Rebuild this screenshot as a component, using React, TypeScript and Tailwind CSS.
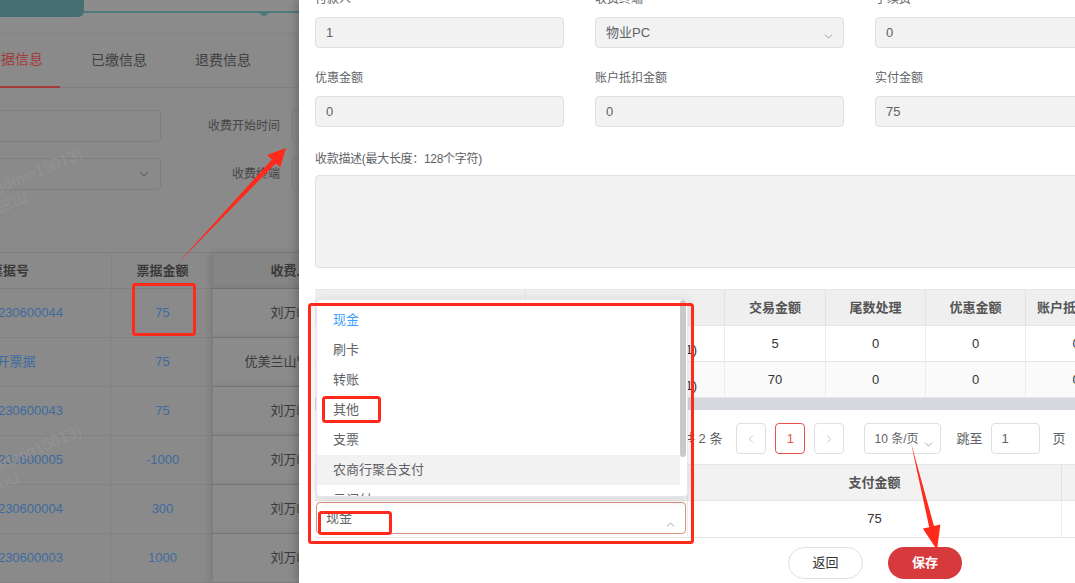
import { ChevronDown, ChevronLeft, ChevronRight, ChevronUp } from "lucide-react";

const leftRows = [
  ["HNS20230600044", "75", "刘万峰"],
  ["未开票据", "75", "优美兰山管理处"],
  ["HNS20230600043", "75", "刘万峰"],
  ["HNS20230600005", "-1000", "刘万峰"],
  ["HNS20230600004", "300", "刘万峰"],
  ["HNS20230600003", "1000", "刘万峰"],
];

const payTypes = ["现金", "刷卡", "转账", "其他", "支票", "农商行聚合支付", "云闪付"];

const LeftPage = () => {
  return (
    <div className="relative h-full w-[299px] shrink-0 overflow-hidden bg-[#8a8a8a]">
      {/* top bar */}
      <div className="flex h-[33px] items-start border-b border-[#868686] bg-[#8c8c8c]">
        <div className="h-[17px] w-[84px] shrink-0 rounded-br-[6px] bg-[#456f70]" />
        <div className="relative mt-[11px] h-[2px] flex-1 bg-[#4d7a7a]">
          <div className="absolute left-[174px] top-[1px] h-0 w-0 border-x-[6px] border-t-[5px] border-x-transparent border-t-[#4d7a7a]" />
        </div>
      </div>

      {/* tabs */}
      <div className="-ml-[30px] flex h-[55px] border-b border-[#7f7f7f]">
        <div className="-mb-px mr-[14px] flex w-[90px] shrink-0 items-center justify-center border-b-2 border-[#a33b3b] text-[14px] text-[#a33b3b]">
          票据信息
        </div>
        <div className="mr-[14px] flex w-[90px] shrink-0 items-center justify-center text-[14px] text-[#3f3f3f]">
          已缴信息
        </div>
        <div className="flex w-[90px] shrink-0 items-center justify-center text-[14px] text-[#3f3f3f]">
          退费信息
        </div>
      </div>

      {/* filter form */}
      <div className="-ml-[30px] flex flex-col gap-[16px] pt-[22px]">
        <div className="flex items-center">
          <div className="h-[32px] w-[191px] shrink-0 rounded-[4px] border border-[#7e7e7e]" />
          <div className="w-[119px] shrink-0 text-right text-[12px] text-[#454545]">收费开始时间</div>
          <div className="ml-[12px] h-[32px] w-[200px] shrink-0 rounded-[4px] border border-[#7e7e7e]" />
        </div>
        <div className="flex items-center">
          <div className="flex h-[32px] w-[191px] shrink-0 items-center justify-end rounded-[4px] border border-[#7e7e7e] pr-[9px] text-[#454545]">
            <ChevronDown size={14} strokeWidth={1.5} />
          </div>
          <div className="w-[119px] shrink-0 text-right text-[12px] text-[#454545]">收费终端</div>
          <div className="ml-[12px] h-[32px] w-[200px] shrink-0 rounded-[4px] border border-[#7e7e7e]" />
        </div>
      </div>

      {/* table */}
      <div className="-ml-[92px] mt-[62px] w-[470px] text-[13px]">
        <div className="flex h-[37px] border-y border-[#7f7f7f] font-bold text-[#3a3a3a]">
          <div className="flex w-[204px] shrink-0 items-center justify-center border-r border-[#828282]">票据号</div>
          <div className="flex w-[101px] shrink-0 items-center justify-center">票据金额</div>
          <div className="flex w-[154px] shrink-0 items-center justify-center bg-[#858585] shadow-[-3px_0_6px_rgba(0,0,0,0.12)]">
            收费人
          </div>
        </div>
        {leftRows.map((r, i) => (
          <div key={i} className="flex h-[49px] border-b border-[#828282]">
            <div className="flex w-[204px] shrink-0 items-center justify-center border-r border-[#858585] text-[#3d6aa0]">
              {r[0]}
            </div>
            <div className="flex w-[101px] shrink-0 items-center justify-center text-[#3d6aa0]">{r[1]}</div>
            <div className="flex w-[154px] shrink-0 items-center justify-center whitespace-nowrap bg-[#8b8b8b] text-[#3a3a3a] shadow-[-3px_0_6px_rgba(0,0,0,0.12)]">
              {r[2]}
            </div>
          </div>
        ))}
      </div>

      {/* watermark */}
      <div className="pointer-events-none absolute left-[-6px] top-[182px] origin-left -rotate-[23deg] whitespace-nowrap text-[16px] leading-[18px] text-[#929292]">
        <div>(admin15013)</div>
        <div>兰山</div>
      </div>
      <div className="pointer-events-none absolute left-[-6px] top-[460px] origin-left -rotate-[24deg] whitespace-nowrap text-[16px] leading-[18px] text-[#929292]">
        <div>(admin15013)</div>
        <div>xiU</div>
      </div>
    </div>
  );
};

const Field = ({ label, value, select }: { label: string; value: string; select?: boolean }) => (
  <div>
    <div className="mb-[8px] h-[20px] text-[12px] leading-[20px] text-[#606266]">{label}</div>
    <div className="relative flex h-[31px] items-center rounded-[4px] border border-[#dcdfe6] bg-[#f2f2f2] px-[10px] text-[13px] text-[#606266]">
      {value}
      {select && (
        <ChevronDown size={13} strokeWidth={1.5} className="absolute bottom-[4px] right-[8px] text-[#909399]" />
      )}
    </div>
  </div>
);

const Modal = () => {
  return (
    <div className="relative h-full flex-1 overflow-hidden bg-white shadow-[-3px_0_8px_rgba(0,0,0,0.2)]">
      <div className="-mt-[11px] w-[900px] pl-[16px]">
        <div className="grid grid-cols-[249px_249px_249px] gap-x-[31px] gap-y-[20px]">
          <Field label="付款人" value="1" />
          <Field label="收费终端" value="物业PC" select />
          <Field label="手续费" value="0" />
          <Field label="优惠金额" value="0" />
          <Field label="账户抵扣金额" value="0" />
          <Field label="实付金额" value="75" />
        </div>

        <div className="mt-[22px] h-[20px] text-[12px] leading-[20px] tracking-[-0.3px] text-[#606266]">
          收款描述(最大长度：128个字符)
        </div>
        <div className="mt-[6px] h-[93px] w-[809px] rounded-[4px] border border-[#dcdfe6] bg-[#f2f2f2]" />

        {/* detail table */}
        <div className="mt-[21px] w-[811px] text-[13px]">
          <div className="grid h-[37px] grid-cols-[211px_199px_101px_100px_100px_100px] border-y border-[#e6e6e6] bg-[#efefef] font-bold text-[#555]">
            <div className="border-r border-[#e2e2e2]" />
            <div className="border-r border-[#e2e2e2]" />
            <div className="flex items-center justify-center border-r border-[#e2e2e2]">交易金额</div>
            <div className="flex items-center justify-center border-r border-[#e2e2e2]">尾数处理</div>
            <div className="flex items-center justify-center border-r border-[#e2e2e2]">优惠金额</div>
            <div className="flex items-center justify-center whitespace-nowrap">账户抵扣金额</div>
          </div>
          {[
            ["5", "bg-white"],
            ["70", "bg-[#fafafa]"],
          ].map(([v, bg], i) => (
            <div
              key={i}
              className={`grid h-[36px] grid-cols-[211px_199px_101px_100px_100px_100px] border-b border-[#e6e6e6] text-[#333] ${bg}`}
            >
              <div className="border-r border-[#ececec]" />
              <div className="flex items-end justify-end whitespace-nowrap border-r border-[#ececec] pb-[2px] pr-[27px]">
                物业服务费(2023-06-01)
              </div>
              <div className="flex items-center justify-center border-r border-[#ececec]">{v}</div>
              <div className="flex items-center justify-center border-r border-[#ececec]">0</div>
              <div className="flex items-center justify-center border-r border-[#ececec]">0</div>
              <div className="flex items-center justify-center">0</div>
            </div>
          ))}
          <div className="h-[12px] bg-[#d7d7df]" />
        </div>

        {/* pagination */}
        <div className="mt-[13px] flex h-[31px] items-center pl-[367px] text-[13px] text-[#606266]">
          <span className="mr-[14px] whitespace-nowrap">共 2 条</span>
          <div className="flex h-[31px] w-[30px] items-center justify-center rounded-[4px] border border-[#dcdfe6] text-[#c0c4cc]">
            <ChevronLeft size={14} strokeWidth={1.5} />
          </div>
          <div className="ml-[9px] flex h-[31px] w-[30px] items-center justify-center rounded-[4px] border border-[#e5534b] text-[#e5534b]">
            1
          </div>
          <div className="ml-[9px] flex h-[31px] w-[30px] items-center justify-center rounded-[4px] border border-[#dcdfe6] text-[#c0c4cc]">
            <ChevronRight size={14} strokeWidth={1.5} />
          </div>
          <div className="relative ml-[20px] flex h-[31px] w-[77px] items-center whitespace-nowrap rounded-[4px] border border-[#dcdfe6] pl-[9px] text-[12px]">
            10 条/页
            <ChevronDown size={13} strokeWidth={1.5} className="absolute bottom-[2px] right-[5px] text-[#909399]" />
          </div>
          <span className="ml-[15px]">跳至</span>
          <div className="ml-[9px] flex h-[31px] w-[49px] items-center rounded-[4px] border border-[#dcdfe6] pl-[9px]">1</div>
          <span className="ml-[12px]">页</span>
        </div>

        {/* payment table */}
        <div className="mt-[10px] w-[850px] text-[13px]">
          <div className="grid h-[37px] grid-cols-[373px_374px_100px] border-y border-[#e6e6e6] bg-[#f2f2f2] font-bold text-[#555]">
            <div className="flex items-center justify-center border-r border-[#e2e2e2]">支付方式</div>
            <div className="flex items-center justify-center border-r border-[#e2e2e2]">支付金额</div>
            <div />
          </div>
          <div className="grid h-[37px] grid-cols-[373px_374px_100px] border-b border-[#e6e6e6] text-[#333]">
            <div className="border-r border-[#ececec] px-px py-[1px]">
              <div className="relative flex h-[32px] items-center rounded-[4px] border border-[#d9907f] pl-[9px] text-[#606266]">
                现金
                <ChevronUp size={13} strokeWidth={1.5} className="absolute bottom-[2px] right-[8px] text-[#909399]" />
                {/* dropdown */}
                <div className="absolute bottom-[calc(100%+6px)] left-[-1px] h-[198px] w-[372px] overflow-hidden rounded-[4px] border border-[#e4e7ed] bg-white pt-[5px] shadow-[0_2px_12px_rgba(0,0,0,0.12)]">
                  {payTypes.map((t, i) => (
                    <div
                      key={t}
                      className={`mr-[7px] flex h-[30px] items-center pl-[16px] ${
                        i === 0 ? "text-[#409eff]" : "text-[#606266]"
                      } ${i === 5 ? "bg-[#f2f2f2]" : ""}`}
                    >
                      {t}
                    </div>
                  ))}
                  <div className="absolute right-px top-0 h-[157px] w-[6px] rounded-full bg-[#c9c9c9]" />
                </div>
              </div>
            </div>
            <div className="flex items-center justify-center border-r border-[#ececec]">75</div>
            <div />
          </div>
        </div>

        {/* buttons */}
        <div className="mt-[9px] flex pl-[473px] text-[13px]">
          <div className="flex h-[32px] w-[75px] items-center justify-center rounded-full border border-[#dcdfe6] text-[#333]">
            返回
          </div>
          <div className="ml-[25px] flex h-[32px] w-[74px] items-center justify-center rounded-full bg-[#d63a3d] font-bold text-white">
            保存
          </div>
        </div>
      </div>
    </div>
  );
};

export default function App() {
  return (
    <div className="relative flex h-[583px] w-[1075px] overflow-hidden font-['Liberation_Sans','Noto_Sans_CJK_SC',sans-serif]">
      <LeftPage />
      <Modal />

      {/* annotations */}
      <svg className="pointer-events-none absolute inset-0" width="1075" height="583" viewBox="0 0 1075 583">
        <g fill="none" stroke="#ff2a1c" strokeWidth="3">
          <rect x="133.5" y="284.5" width="61" height="50" rx="2" />
          <rect x="309.5" y="304.5" width="383" height="238" rx="2" />
          <rect x="323.5" y="397.5" width="56" height="24" rx="2" />
          <rect x="319.5" y="512.5" width="71" height="21" rx="2" />
        </g>
        <g fill="#ff2a1c">
          <polygon points="177,264 275.5,163.6 280.3,167.3 286,148 267.1,154.9 271.9,159.5" />
          <polygon points="911,443 934,526 940.4,524.6 937,550 922.8,528.6 929.2,527.2" />
        </g>
      </svg>
    </div>
  );
}
